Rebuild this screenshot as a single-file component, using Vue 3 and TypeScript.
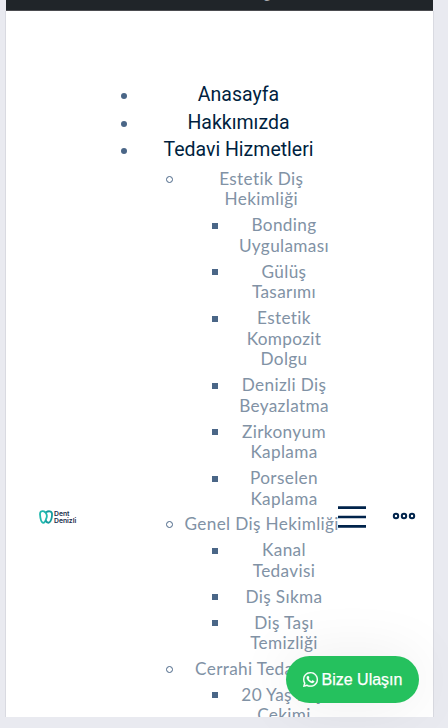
<script setup lang="ts">
interface Entry {
  lines: string[]
  children?: Entry[]
}

const topItems: string[] = ['Anasayfa', 'Hakkımızda', 'Tedavi Hizmetleri']

const services: Entry[] = [
  {
    lines: ['Estetik Diş', 'Hekimliği'],
    children: [
      { lines: ['Bonding', 'Uygulaması'] },
      { lines: ['Gülüş', 'Tasarımı'] },
      { lines: ['Estetik', 'Kompozit', 'Dolgu'] },
      { lines: ['Denizli Diş', 'Beyazlatma'] },
      { lines: ['Zirkonyum', 'Kaplama'] },
      { lines: ['Porselen', 'Kaplama'] },
    ],
  },
  {
    lines: ['Genel Diş Hekimliği'],
    children: [
      { lines: ['Kanal', 'Tedavisi'] },
      { lines: ['Diş Sıkma'] },
      { lines: ['Diş Taşı', 'Temizliği'] },
    ],
  },
  {
    lines: ['Cerrahi Tedaviler'],
    children: [{ lines: ['20 Yaş Dişi', 'Çekimi'] }],
  },
]
</script>

<template>
  <div class="page">
    <div class="topbar"><span class="topbar-text">g</span></div>
    <header class="panel">
      <a class="logo">
        <svg width="14" height="14" viewBox="0 0 14 14" fill="none" stroke-width="1.8">
          <path d="M5 1.400C2.600.6.900 1.700 1 4.300c.2 3.300.9 7.900 3.100 8.500 2.300.3 2.500-2.900 3.400-5C8.300 6 7.600 2.500 5 1.400Z" stroke="#20b8ae" />
          <path d="M7 2.400C9 .8 12.800.6 13 3.600c.2 3.500-1 8.400-3.100 9.100-1.500.3-2.600-.9-3.200-2.200" stroke="#159b9f" />
        </svg>
        <span class="logo-text"><span>Dent</span><span>Denizli</span></span>
      </a>
      <nav class="nav">
        <ul class="list">
          <li v-for="item in topItems" :key="item" class="row top-row">
            <i class="marker disc"></i><a class="label">{{ item }}</a>
          </li>
        </ul>
        <ul class="list sub">
          <li v-for="group in services" :key="group.lines[0]">
            <div class="row sub-row">
              <i class="marker circle"></i>
              <a class="label"><span v-for="line in group.lines" :key="line">{{ line }}</span></a>
            </div>
            <ul class="list nested">
              <li v-for="child in group.children" :key="child.lines[0]" class="row sub-row">
                <i class="marker square"></i>
                <a class="label"><span v-for="line in child.lines" :key="line">{{ line }}</span></a>
              </li>
            </ul>
          </li>
        </ul>
      </nav>
      <svg class="burger" width="28" height="22" viewBox="0 0 28 22">
        <path d="M0 1.700h28M0 11h28M0 20.300h28" stroke="#00234b" stroke-width="2.700" />
      </svg>
      <svg class="dots" width="24" height="8" viewBox="0 0 24 8" fill="none" stroke="#00234b" stroke-width="2">
        <circle cx="4" cy="4" r="2.200" /><circle cx="12" cy="4" r="2.200" /><circle cx="20" cy="4" r="2.200" />
      </svg>
    </header>
    <a class="contact">
      <svg width="15" height="15" viewBox="0 0 448 448" fill="#fff">
        <path d="M380.900 65.100C339 23.100 283.200 0 223.900 0 101.500 0 1.900 99.600 1.900 222c0 39.100 10.200 77.300 29.600 111L0 448l117.700-30.900c32.400 17.700 68.900 27 106.100 27h.1c122.300 0 224.100-99.600 224.100-222 0-59.300-25.200-115-67.100-157zM223.900 406.700c-33.200 0-65.700-8.900-94-25.700l-6.700-4-69.800 18.300L72 327.200l-4.400-7c-18.500-29.400-28.200-63.300-28.200-98.200 0-101.700 82.800-184.500 184.600-184.500 49.300 0 95.600 19.200 130.400 54.100 34.800 34.900 56.200 81.200 56.100 130.500 0 101.800-84.900 184.600-186.600 184.600zm101.200-138.200c-5.500-2.800-32.800-16.200-37.900-18-5.100-1.900-8.800-2.800-12.500 2.800-3.700 5.600-14.300 18-17.600 21.800-3.200 3.700-6.500 4.200-12 1.400-32.600-16.300-54-29.100-75.500-66-5.700-9.800 5.700-9.100 16.300-30.300 1.800-3.700.9-6.900-.5-9.700-1.400-2.800-12.500-30.100-17.100-41.200-4.500-10.800-9.100-9.300-12.500-9.500-3.200-.2-6.900-.2-10.600-.2-3.700 0-9.700 1.400-14.800 6.900-5.100 5.600-19.400 19-19.400 46.300 0 27.300 19.900 53.700 22.600 57.400 2.800 3.700 39.100 59.700 94.800 83.800 35.200 15.200 49 16.500 66.600 13.900 10.700-1.600 32.800-13.400 37.400-26.400 4.600-13 4.600-24.100 3.200-26.400-1.300-2.500-5-3.900-10.500-6.600z" stroke="#fff" stroke-width="8" />
      </svg>
      <span>Bize Ulaşın</span>
    </a>
  </div>
</template>

<style>
body {
  margin: 0;
  background: #e9eaf0;
}
</style>

<style scoped>
.page {
  box-sizing: border-box;
  width: 448px;
  height: 728px;
  padding: 0 14px 11px 5px;
  overflow: hidden;
  background: #e9eaf0;
  position: relative;
}
.topbar {
  box-sizing: border-box;
  height: 11px;
  margin-left: 1px;
  margin-right: 1px;
  overflow: hidden;
  background: #202529;
  border-bottom: 1px solid #4b4c50;
  display: flex;
  padding-left: 257px;
}
.topbar-text {
  font: 15px/15px Roboto, sans-serif;
  color: #a8abae;
  margin-top: -14px;
}
.panel {
  box-sizing: border-box;
  height: 706px;
  display: flex;
  align-items: flex-start;
  overflow: hidden;
  background: #fff;
  border: solid #d9dae1;
  border-width: 0 1px;
}
.logo {
  display: flex;
  gap: 1px;
  width: 42px;
  margin: 499px 0 0 33px;
}
.logo svg {
  flex: none;
}
.logo-text {
  font: 600 6.800px/7px Inter, sans-serif;
  color: #172b4a;
}
.logo-text span {
  display: block;
}
.nav {
  width: 199px;
  flex: none;
  margin: 70.200px 0 0 58px;
}
.list {
  margin: 0;
  padding: 0;
  list-style: none;
}
.row {
  display: flex;
  text-align: center;
}
.top-row {
  height: 27.500px;
  align-items: center;
  font: 19.500px/27.500px Roboto, sans-serif;
  color: #001f40;
}
.sub {
  padding: 2.500px 0 0 45.500px;
}
.nested {
  padding-left: 45.500px;
}
.sub-row {
  padding: 2.600px 0;
  font: 17.200px/20.620px Lato, "Open Sans", sans-serif;
  letter-spacing: 0.350px;
  color: #8192a5;
}
.label {
  flex: 1;
  white-space: nowrap;
}
.label span {
  display: block;
}
.marker {
  flex: none;
  box-sizing: border-box;
  width: 6px;
  height: 6px;
}
.disc {
  margin: 3px 12px 0 -18px;
  border-radius: 50%;
  background: #4a6687;
}
.circle {
  margin: 7px 11.500px 0 -18.500px;
  width: 7px;
  height: 7px;
  border: 1px solid #4a6687;
  border-radius: 50%;
}
.square {
  margin: 7.500px 12px 0 -18px;
  background: #4a6687;
}
.burger {
  flex: none;
  margin-top: 495px;
}
.dots {
  flex: none;
  margin: 501px 0 0 26px;
}
.contact {
  position: absolute;
  left: 286px;
  top: 656px;
  box-sizing: border-box;
  width: 133px;
  height: 47px;
  border-radius: 24px;
  background: #25c15e;
  box-shadow: 0 0 60px rgba(0, 0, 0, 0.08);
  display: flex;
  align-items: center;
  justify-content: center;
  gap: 4px;
  font: 16px/20px "Liberation Sans", sans-serif;
  -webkit-text-stroke: 0.250px #fff;
  color: #fff;
}
</style>
